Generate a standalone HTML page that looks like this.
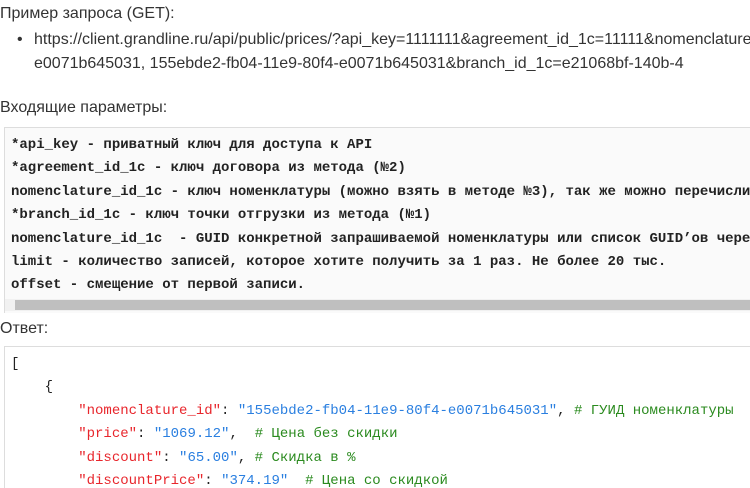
<html><head><style>
html,body{margin:0;width:750px;height:488px;overflow:hidden}
body{background:#fff;font-family:"Liberation Sans",sans-serif;color:#333;position:relative}
.t{position:absolute;font-size:16px;white-space:nowrap;overflow:hidden;max-width:750px}
.box{position:absolute;left:4px;border:1px solid #ddd;border-right:none;background:#fafafa;width:746px;overflow:hidden}
pre{margin:0;font-family:"Liberation Mono","DejaVu Sans Mono",monospace;font-size:14px;line-height:23.4px;white-space:pre;color:#222}
.b{font-weight:bold}
.r{color:#e8262c}.u{color:#2a7fe0}.g{color:#2a8a1e}
</style></head><body>
<div class="t" style="left:0;top:5px">Пример запроса (GET):</div>
<div class="t" style="left:17px;top:31px">•</div>
<div class="t" style="left:34px;top:31px;max-width:716px">https://client.grandline.ru/api/public/prices/?api_key=1111111&amp;agreement_id_1c=11111&amp;nomenclature_id_1c=155ebde2-fb04-11e9-80f4-</div>
<div class="t" style="left:34px;top:55px;max-width:716px">e0071b645031, 155ebde2-fb04-11e9-80f4-e0071b645031&amp;branch_id_1c=e21068bf-140b-4</div>
<div class="t" style="left:0;top:99px">Входящие параметры:</div>
<div class="box" style="top:127px;height:185px;border-bottom:none">
<pre class="b" style="padding:6px 6px">*api_key - приватный ключ для доступа к API
*agreement_id_1c - ключ договора из метода (№2)
nomenclature_id_1c - ключ номенклатуры (можно взять в методе №3), так же можно перечислить
*branch_id_1c - ключ точки отгрузки из метода (№1)
nomenclature_id_1c  - GUID конкретной запрашиваемой номенклатуры или список GUID’ов через
limit - количество записей, которое хотите получить за 1 раз. Не более 20 тыс.
offset - смещение от первой записи.</pre>
</div>
<div style="position:absolute;left:5px;top:299px;width:745px;height:12px;background:#f1f1f1"></div>
<div style="position:absolute;left:15px;top:300px;width:735px;height:10px;background:#bfbfbf"></div>
<div class="t" style="left:0;top:320px">Ответ:</div>
<div class="box" style="top:346px;height:150px;background:#fff">
<pre style="padding:6px 6px">[
    {
        <span class="r">"nomenclature_id"</span>: <span class="u">"155ebde2-fb04-11e9-80f4-e0071b645031"</span>, <span class="g"># ГУИД номенклатуры</span>
        <span class="r">"price"</span>: <span class="u">"1069.12"</span>,  <span class="g"># Цена без скидки</span>
        <span class="r">"discount"</span>: <span class="u">"65.00"</span>, <span class="g"># Скидка в %</span>
        <span class="r">"discountPrice"</span>: <span class="u">"374.19"</span>  <span class="g"># Цена со скидкой</span></pre>
</div>
</body></html>
